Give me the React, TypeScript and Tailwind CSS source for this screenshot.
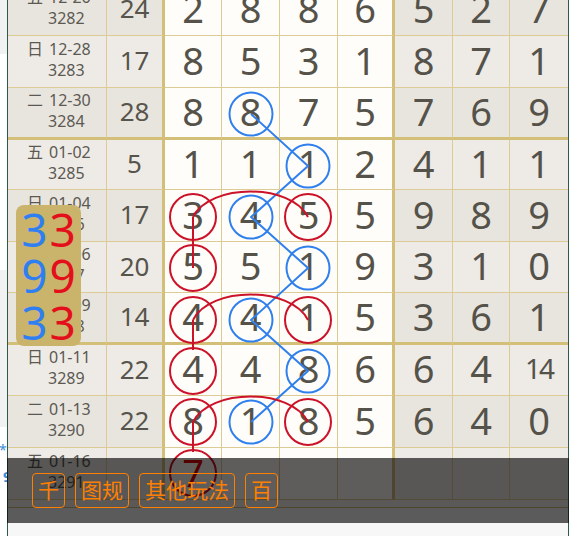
type Row = {
  wd: string;
  date: string;
  no: string;
  sum: string;
  d: string[];
  e: string[];
  h: number;
  thick?: boolean;
};

const rows: Row[] = [
  { wd: "五", date: "12-26", no: "3282", sum: "24", d: ["2", "8", "8", "6"], e: ["5", "2", "7"], h: 52 },
  { wd: "日", date: "12-28", no: "3283", sum: "17", d: ["8", "5", "3", "1"], e: ["8", "7", "1"], h: 52 },
  { wd: "二", date: "12-30", no: "3284", sum: "28", d: ["8", "8", "7", "5"], e: ["7", "6", "9"], h: 52, thick: true },
  { wd: "五", date: "01-02", no: "3285", sum: "5", d: ["1", "1", "1", "2"], e: ["4", "1", "1"], h: 50 },
  { wd: "日", date: "01-04", no: "3286", sum: "17", d: ["3", "4", "5", "5"], e: ["9", "8", "9"], h: 52 },
  { wd: "二", date: "01-06", no: "3287", sum: "20", d: ["5", "5", "1", "9"], e: ["3", "1", "0"], h: 51 },
  { wd: "五", date: "01-09", no: "3288", sum: "14", d: ["4", "4", "1", "5"], e: ["3", "6", "1"], h: 52, thick: true },
  { wd: "日", date: "01-11", no: "3289", sum: "22", d: ["4", "4", "8", "6"], e: ["6", "4", "14"], h: 51 },
  { wd: "二", date: "01-13", no: "3290", sum: "22", d: ["8", "1", "8", "5"], e: ["6", "4", "0"], h: 52 },
  { wd: "五", date: "01-16", no: "3291", sum: "", d: ["7", "", "", ""], e: ["", "", ""], h: 52 },
];

const heights: Record<number, string> = { 50: "h-[50px]", 51: "h-[51px]", 52: "h-[52px]" };

// circle centres in page coordinates
const X1 = 193;
const X2 = 251;
const X3 = 308;
const blue = [
  [X2, 114],
  [X3, 166],
  [X2, 217],
  [X3, 268],
  [X2, 320],
  [X3, 371],
  [X2, 422],
];
const red = [
  [X1, 217],
  [X3, 217],
  [X1, 268],
  [X1, 320],
  [X3, 320],
  [X1, 371],
  [X1, 422],
  [X3, 422],
  [X1, 473],
];
const arcs = [217, 320, 422];

function TableRow({ r, i }: { r: Row; i: number }) {
  const side = i % 2 === 0 ? "bg-[#e8e5df]" : "bg-[#eeebe7]";
  const bottom = r.thick ? "border-b-[3px] border-b-[#d3bf78]" : "border-b border-b-[#dccb95]";
  const thin = "border-r border-r-[#dccb95]";
  const thickR = "border-r-[3px] border-r-[#d3bf78]";
  return (
    <div className={`grid grid-cols-[99px_58px_57px_58px_58px_57px_58px_57px_58px] ${heights[r.h]}`}>
      <div className={`flex items-center pl-[19px] text-[16px] leading-[21px] text-[#5c5952] ${side} ${bottom} ${thin}`}>
        <div className="flex -mt-[4px]">
          <span className="self-start">{r.wd}</span>
          <div className="ml-[6px] flex flex-col">
            <span>{r.date}</span>
            <span className="-ml-px">{r.no}</span>
          </div>
        </div>
      </div>
      <div className={`flex items-center justify-center text-[26px] leading-none text-[#57544c] ${side} ${bottom} ${thickR}`}>
        <span className="-mt-[3px]">{r.sum}</span>
      </div>
      {r.d.map((v, j) => (
        <div
          key={j}
          className={`flex items-center justify-center bg-[#fffdf9] text-[38px] leading-none ${bottom} ${j === 3 ? thickR : thin} ${
            i === 9 && j === 0 ? "text-[#e00000]" : "text-[#55524a]"
          }`}
        >
          <span className="-mt-[4px]">{v}</span>
        </div>
      ))}
      {r.e.map((v, j) => (
        <div
          key={j}
          className={`flex items-center justify-center leading-none text-[#55524a] ${side} ${bottom} ${j < 2 ? thin : ""} ${
            v.length > 1 ? "text-[28px] tracking-[-2px]" : "text-[38px]"
          }`}
        >
          <span className="-mt-[4px]">{v}</span>
        </div>
      ))}
    </div>
  );
}

export default function App() {
  return (
    <div className="relative flex h-[536px] w-[580px] overflow-hidden bg-white font-['Noto_Sans','Noto_Sans_CJK_SC',sans-serif]">
      <div className="flex w-[7px] shrink-0 flex-col overflow-hidden">
        <div className="h-[54px] bg-[#f1f1f1]" />
        <div className="h-[216px]" />
        <div className="h-[157px] bg-[#f1f1f1]" />
        <div className="flex flex-col pt-[16px] text-[#3b8fd8]">
          <span className="-ml-[1px] text-[14px] leading-[14px]">*</span>
          <span className="ml-[3px] mt-[12px] text-[15px] font-bold leading-[15px]">9</span>
        </div>
      </div>

      <div className="flex w-[562px] shrink-0 flex-col border-x border-[#2c5a4b]">
        <div className="-mt-[16px] flex flex-col">
          {rows.map((r, i) => (
            <TableRow key={r.no} r={r} i={i} />
          ))}
        </div>
        <div className="h-[8px] border-b border-b-[#d3bf78] bg-[#f4f2ee]" />
        <div className="flex-1 bg-[#f7f7f7]" />
      </div>

      <svg className="pointer-events-none absolute left-0 top-0" width="580" height="536" viewBox="0 0 580 536" fill="none">
        <path
          d={`M${X2},114 L${X3},166 L${X2},217 L${X3},268 L${X2},320 L${X3},371 L${X2},422`}
          stroke="#2f80ed"
          strokeWidth="2"
          strokeLinejoin="round"
        />
        {arcs.map((y) => (
          <path key={y} d={`M${X1},${y} C${X1 + 17},${y - 34} ${X3 - 17},${y - 34} ${X3},${y}`} stroke="#cc1228" strokeWidth="2" />
        ))}
        <path d={`M${X1},217 L${X1},268 M${X1},320 L${X1},350 M${X1},422 L${X1},452`} stroke="#cc1228" strokeWidth="2" />
        {blue.map(([x, y], k) => (
          <circle key={`b${k}`} cx={x} cy={y} r="21.5" stroke="#2f80ed" strokeWidth="2" />
        ))}
        {red.map(([x, y], k) => (
          <circle key={`r${k}`} cx={x} cy={y} r="23" stroke="#cc1228" strokeWidth="2" />
        ))}
      </svg>

      <div className="absolute left-[16px] top-[205px] flex h-[141px] w-[65px] flex-col items-center justify-center rounded-[8px] bg-[#cab46c] text-[46px] leading-[46.5px]">
        {["3", "9", "3"].map((n, k) => (
          <div key={k} className="flex gap-[2px]">
            <span className="text-[#2f7ff2]">{n}</span>
            <span className="text-[#e3101c]">{n}</span>
          </div>
        ))}
      </div>

      <div className="absolute left-[7px] top-[458px] flex h-[65px] w-[562px] items-start gap-[10px] bg-[rgba(0,0,0,0.63)] pl-[25px] pt-[15px]">
        {["千", "图规", "其他玩法", "百"].map((t) => (
          <div
            key={t}
            className="flex h-[35px] items-center rounded-[4px] border border-[#ff7f00] px-[5px] text-[21px] leading-none text-[#ff8000]"
          >
            {t}
          </div>
        ))}
      </div>
    </div>
  );
}
